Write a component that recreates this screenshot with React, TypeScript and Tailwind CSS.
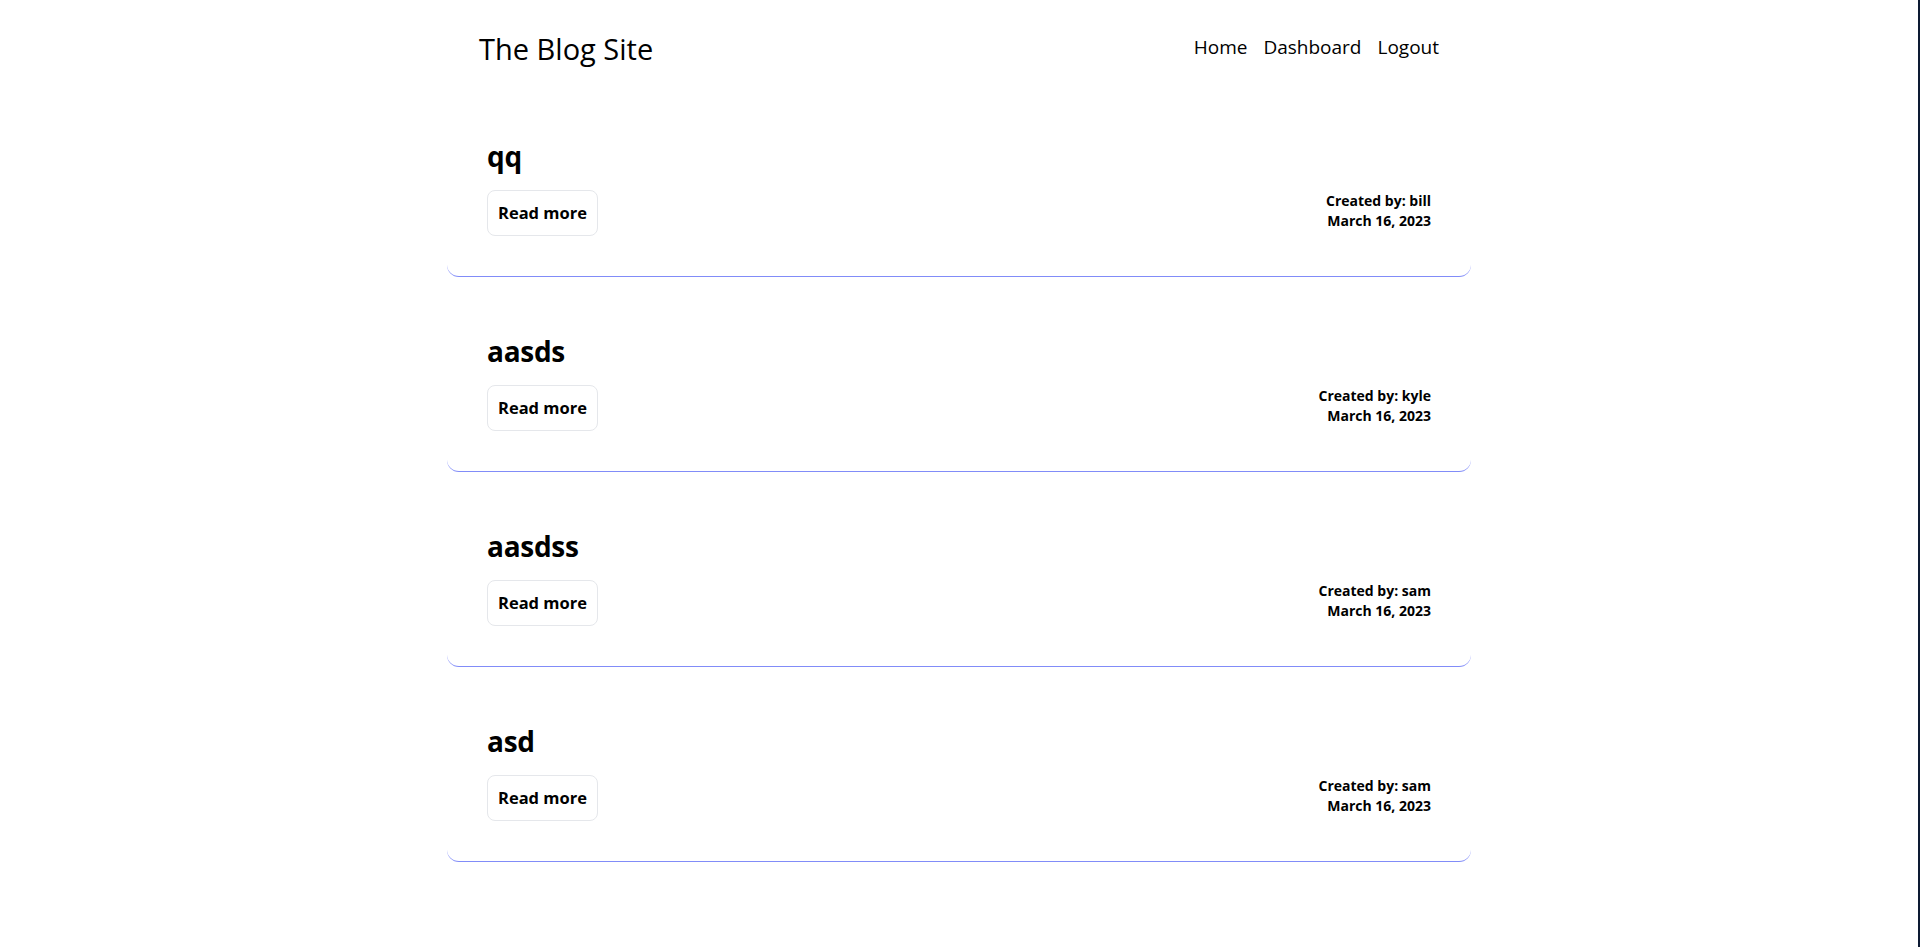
const posts = [
  { title: "qq", author: "bill", date: "March 16, 2023" },
  { title: "aasds", author: "kyle", date: "March 16, 2023" },
  { title: "aasdss", author: "sam", date: "March 16, 2023" },
  { title: "asd", author: "sam", date: "March 16, 2023" },
];

const PostCard = ({ title, author, date }: { title: string; author: string; date: string }) => {
  return (
    <div className="mb-4 rounded-xl border-b border-[#818cf8] bg-white p-10">
      <h2 className="mb-4 text-[28px] leading-9 font-bold tracking-[-0.01em]">{title}</h2>
      <div className="flex items-center justify-between">
        <button className="rounded-lg border border-gray-200 bg-white px-2.5 py-2 text-[16.5px] leading-7 font-bold">
          Read more
        </button>
        <div className="pb-1 text-right text-sm font-bold">
          <p>Created by: {author}</p>
          <p>{date}</p>
        </div>
      </div>
    </div>
  );
};

export default function App() {
  return (
    <div className="flex min-h-screen bg-white text-black font-['Open_Sans',sans-serif]">
      <div className="flex-1">
        <div className="mx-auto max-w-5xl">
          <header className="flex h-[98px] items-start justify-between px-8 pt-[31px]">
            <h1 className="text-[29px] leading-9">The Blog Site</h1>
            <nav className="flex gap-4 pt-0.5 text-[19px] leading-7">
              <a href="#">Home</a>
              <a href="#">Dashboard</a>
              <a href="#">Logout</a>
            </nav>
          </header>
          <main>
            {posts.map((p, i) => (
              <PostCard key={i} {...p} />
            ))}
          </main>
        </div>
      </div>
      <div className="w-[2px] bg-[#0d1a33]"></div>
    </div>
  );
}
